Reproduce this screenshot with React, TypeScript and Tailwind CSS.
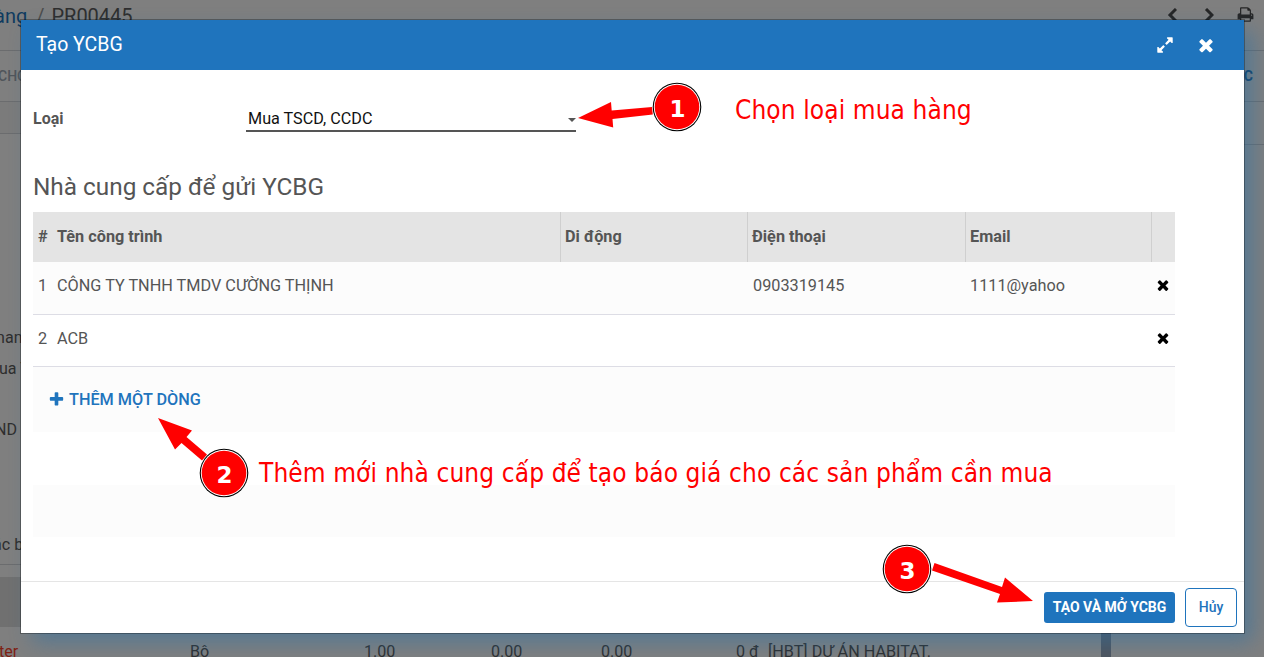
import React from 'react';

const PATHS = {
  times:
    'M1490 1322q0 40-28 68l-136 136q-28 28-68 28t-68-28l-294-294-294 294q-28 28-68 28t-68-28l-136-136q-28-28-28-68t28-68l294-294-294-294q-28-28-28-68t28-68l136-136q28-28 68-28t68 28l294 294 294-294q28-28 68-28t68 28l136 136q28 28 28 68t-28 68l-294 294 294 294q28 28 28 68z',
  plus:
    'M1600 736v192q0 40-28 68t-68 28h-416v416q0 40-28 68t-68 28h-192q-40 0-68-28t-28-68v-416h-416q-40 0-68-28t-28-68v-192q0-40 28-68t68-28h416v-416q0-40 28-68t68-28h192q40 0 68 28t28 68v416h416q40 0 68 28t28 68z',
  expand:
    'M883 1056q0 13-10 23l-332 332 144 144q19 19 19 45t-19 45-45 19h-448q-26 0-45-19t-19-45v-448q0-26 19-45t45-19 45 19l144 144 332-332q10-10 23-10t23 10l114 114q10 10 10 23zm781-864v448q0 26-19 45t-45 19-45-19l-144-144-332 332q-10 10-23 10t-23-10l-114-114q-10-10-10-23t10-23l332-332-144-144q-19-19-19-45t19-45 45-19h448q26 0 45 19t19 45z',
  print:
    'M448 1536h896v-256h-896v256zm0-640h896v-384h-160q-40 0-68-28t-28-68v-160h-640v640zm1152 64q0-26-19-45t-45-19-45 19-19 45 19 45 45 19 45-19 19-45zm128 0v416q0 13-9.5 22.5t-22.5 9.5h-224v160q0 40-28 68t-68 28h-960q-40 0-68-28t-28-68v-160h-224q-13 0-22.5-9.5t-9.5-22.5v-416q0-79 56.5-135.5t135.5-56.5h64v-544q0-40 28-68t68-28h672q40 0 88 20t76 48l152 152q28 28 48 76t20 88v256h64q79 0 135.5 56.5t56.5 135.5z',
};

function Icon({ name, className }: { name: keyof typeof PATHS; className: string }) {
  return (
    <svg viewBox="0 0 1792 1792" fill="currentColor" className={className}>
      <path d={PATHS[name]} />
    </svg>
  );
}

function Chevron({ d }: { d: string }) {
  return (
    <svg viewBox="0 0 10 14" className="h-[14px] w-[10px] shrink-0" fill="none" stroke="#262626" strokeWidth="3">
      <path d={d} />
    </svg>
  );
}

function Backdrop() {
  return (
    <div className="flex h-[657px] w-[1264px] flex-col bg-[#7f7f7f] text-[16.1px] text-[#2e2e2e]">
      <header className="flex h-[51px] shrink-0 items-start border-b border-[#6b6c6e]">
        <div className="-ml-[17px] flex pt-[4px] text-[20px] leading-6 whitespace-pre">
          <span className="text-[#0f3b60]">hàng</span>
          <span className="pl-[9px] text-[#4c4c4c]">/</span>
          <span className="pl-[7px]">PR00445</span>
        </div>
        <div className="ml-auto flex items-center pt-[6px] pr-[10px]">
          <Chevron d="M9 1 3 7l6 6" />
          <span className="w-[27px]" />
          <Chevron d="M2 1l6 6-6 6" />
          <span className="w-[23px]" />
          <Icon name="print" className="h-[17px] w-[17px] text-[#262626]" />
        </div>
      </header>
      <div className="flex h-[51px] shrink-0 items-center justify-between border-b border-[#6b6c6e] text-[14px] font-medium">
        <span className="-ml-[2px] pt-px text-[#50555b]">CHỌN</span>
        <span className="pr-[11px] pt-px text-[14px] font-bold text-[#0f3b60]">C</span>
      </div>
      <div className="flex h-[475px] shrink-0">
        <div className="flex w-[60px] flex-col">
          <div className="h-[32px] shrink-0 border-b border-[#6b6c6e] bg-[#7b7b7b]" />
          <div className="mt-[192px] -ml-[4px] leading-6">nan</div>
          <div className="mt-[7px] -ml-px leading-6">ua T</div>
          <div className="mt-[37px] -ml-[5px] leading-6">ND</div>
          <div className="mt-[91px] -ml-[7px] leading-6">ác bị</div>
          <div className="mt-[7px] h-px bg-[#6b6c6e]" />
          <div className="mt-[12px] -mb-[50px] h-[50px] shrink-0 bg-[#707070]" />
        </div>
        <div className="ml-auto h-[43px] w-[60px] border-b border-[#6b6c6e]" />
      </div>
      <div className="flex h-[80px] shrink-0 leading-6 whitespace-pre [&>span]:pt-[63px]">
        <span className="-ml-[1px] w-[191px] text-[#7f2214]">ter</span>
        <span className="w-[174px]">Bộ</span>
        <span className="w-[127px]">1.00</span>
        <span className="w-[110px]">0.00</span>
        <span className="w-[135px]">0.00</span>
        <span className="w-[32px]">0 đ</span>
        <span className="w-[333px] text-[16.2px]">[HBT] DỰ ÁN HABITAT.</span>
        <div className="w-[10px] self-stretch bg-[#4f555f]" />
      </div>
    </div>
  );
}

const GRID = 'grid grid-cols-[527px_187px_218px_186px_24px] w-[1142px]';

const SUPPLIERS = [
  { id: 1, name: 'CÔNG TY TNHH TMDV CƯỜNG THỊNH', phone: '0903319145', email: '1111@yahoo' },
  { id: 2, name: 'ACB', phone: '', email: '' },
];

function SupplierTable() {
  return (
    <div className="text-[16.25px] leading-6">
      <div className={GRID + ' h-[50px] items-stretch bg-[#e4e4e4] font-bold [&>div]:pt-[13px] [&>div]:pl-[4px]'}>
        <div className="flex">
          <span className="w-[20px] pl-px">#</span>
          <span>Tên công trình</span>
        </div>
        <div className="border-l border-[#cfcfcf]">Di động</div>
        <div className="border-l border-[#cfcfcf]">Điện thoại</div>
        <div className="border-l border-[#cfcfcf]">Email</div>
        <div className="border-l border-[#cfcfcf]" />
      </div>
      {SUPPLIERS.map((s) => (
        <div
          key={s.id}
          className={
            GRID +
            (s.id === 1
              ? ' h-[53px] border-b border-[#dddde5] bg-[#fcfcfc] pt-[12px]'
              : ' h-[52px] border-b border-[#dddde5] pt-[12px]')
          }
        >
          <div className="flex pl-[4px]">
            <span className="w-[20px] pl-px">{s.id}</span>
            <span>{s.name}</span>
          </div>
          <div />
          <div className="pl-[6px]">{s.phone}</div>
          <div className="pl-[5px]">{s.email}</div>
          <div className="pt-[3px] pl-[4px]">
            <Icon name="times" className="h-[16px] w-[16px] text-black" />
          </div>
        </div>
      ))}
      <div className="flex h-[65px] w-[1142px] items-start bg-[#fcfcfc] pt-[21px] pl-[15px] font-medium text-[#1f74bd]">
        <Icon name="plus" className="mt-[3px] mr-[4px] h-[17px] w-[17px]" />
        THÊM MỘT DÒNG
      </div>
      <div className="mt-[53px] h-[52px] w-[1142px] bg-[#fcfcfc]" />
    </div>
  );
}

function Modal() {
  return (
    <section className="absolute top-[19px] left-[20px] flex h-[615px] w-[1225px] flex-col border border-black/30 bg-white bg-clip-padding text-[#555555] shadow-[10px_10px_20px_-2px_rgba(38,112,170,0.48)]">
      <header className="flex h-[50px] shrink-0 items-center bg-[#1f74bd] pl-[15px] text-white">
        <h1 className="text-[19.5px]">Tạo YCBG</h1>
        <Icon name="expand" className="ml-auto h-[18px] w-[18px]" />
        <Icon name="times" className="mr-[28px] ml-[22px] h-[20px] w-[20px]" />
      </header>
      <div className="flex grow flex-col pl-[12px]">
        <div className="mt-[36px] flex h-[26px] text-[16.2px] leading-6">
          <span className="w-[213px] pt-px text-[16px] font-bold">Loại</span>
          <div className="flex h-[26px] w-[330px] items-start justify-between border-b-2 border-[#555555] pl-[2px] text-[#111111]">
            <span className="pt-px">Mua TSCD, CCDC</span>
            <svg viewBox="0 0 8 4" className="mt-[12px] h-[4px] w-[8px]">
              <path d="M0 0h8L4 4z" fill="#555" />
            </svg>
          </div>
        </div>
        <h2 className="mt-[38px] mb-[8px] text-[24.35px] leading-[34px]">Nhà cung cấp để gửi YCBG</h2>
        <SupplierTable />
      </div>
      <footer className="flex h-[52px] shrink-0 items-center justify-end gap-[10px] border-t border-[#e5e5e5] pr-[7px] text-[14px] font-medium">
        <button className="h-[31px] w-[131px] rounded-[3px] bg-[#1f74bd] text-[14px] font-bold whitespace-nowrap text-white">TẠO VÀ MỞ YCBG</button>
        <button className="h-[39px] w-[52px] rounded-[4px] border border-[#1f74bd] text-[#1f74bd]">Hủy</button>
      </footer>
    </section>
  );
}

function Marker({ n, x, y }: { n: number; x: number; y: number }) {
  return (
    <g>
      <circle cx={x} cy={y} r="24.3" fill="#000" />
      <circle cx={x} cy={y} r="23.2" fill="#fff" />
      <circle cx={x} cy={y} r="22.3" fill="#f00" />
      <text x={x + 0.5} y={y + 10} textAnchor="middle" fill="#fff" fontSize="23" fontWeight="700" fontFamily="'DejaVu Sans', sans-serif">
        {n}
      </text>
    </g>
  );
}

function Annotations() {
  return (
    <div className="pointer-events-none absolute inset-0 text-[#ff0000]">
      <svg viewBox="0 0 1264 657" className="absolute inset-0 h-[657px] w-[1264px]">
        <g fill="#f00">
          <path d="M578 118 611 102l.7 8.500L652 107l.8 7.500L612.500 119l.7 8.500z" />
          <path d="M158 418 192 430.500l-5.500 6.500L207 454.500l-5 6L181.500 443l-6.500 6.500z" />
          <path d="M934.500 563 1002 587l3-9.500 28 23.500-36 1.500 3-8.500L932 570.500z" />
        </g>
        <Marker n={1} x={677} y={107} />
        <Marker n={2} x={224} y={473} />
        <Marker n={3} x={907} y={569} />
      </svg>
      <p className="absolute top-[93px] left-[735px] font-['DejaVu_Sans_Condensed','DejaVu_Sans',sans-serif] text-[26px] leading-[34px] tracking-[0.1px] whitespace-nowrap [font-stretch:condensed]">
        Chọn loại mua hàng
      </p>
      <p className="absolute top-[456px] left-[259px] font-['DejaVu_Sans_Condensed','DejaVu_Sans',sans-serif] text-[26px] leading-[34px] tracking-[0.1px] whitespace-nowrap [font-stretch:condensed]">
        Thêm mới nhà cung cấp để tạo báo giá cho các sản phẩm cần mua
      </p>
    </div>
  );
}

export default function App() {
  return (
    <main className="relative h-[657px] w-[1264px] overflow-hidden font-[Roboto,sans-serif]">
      <Backdrop />
      <Modal />
      <Annotations />
    </main>
  );
}
